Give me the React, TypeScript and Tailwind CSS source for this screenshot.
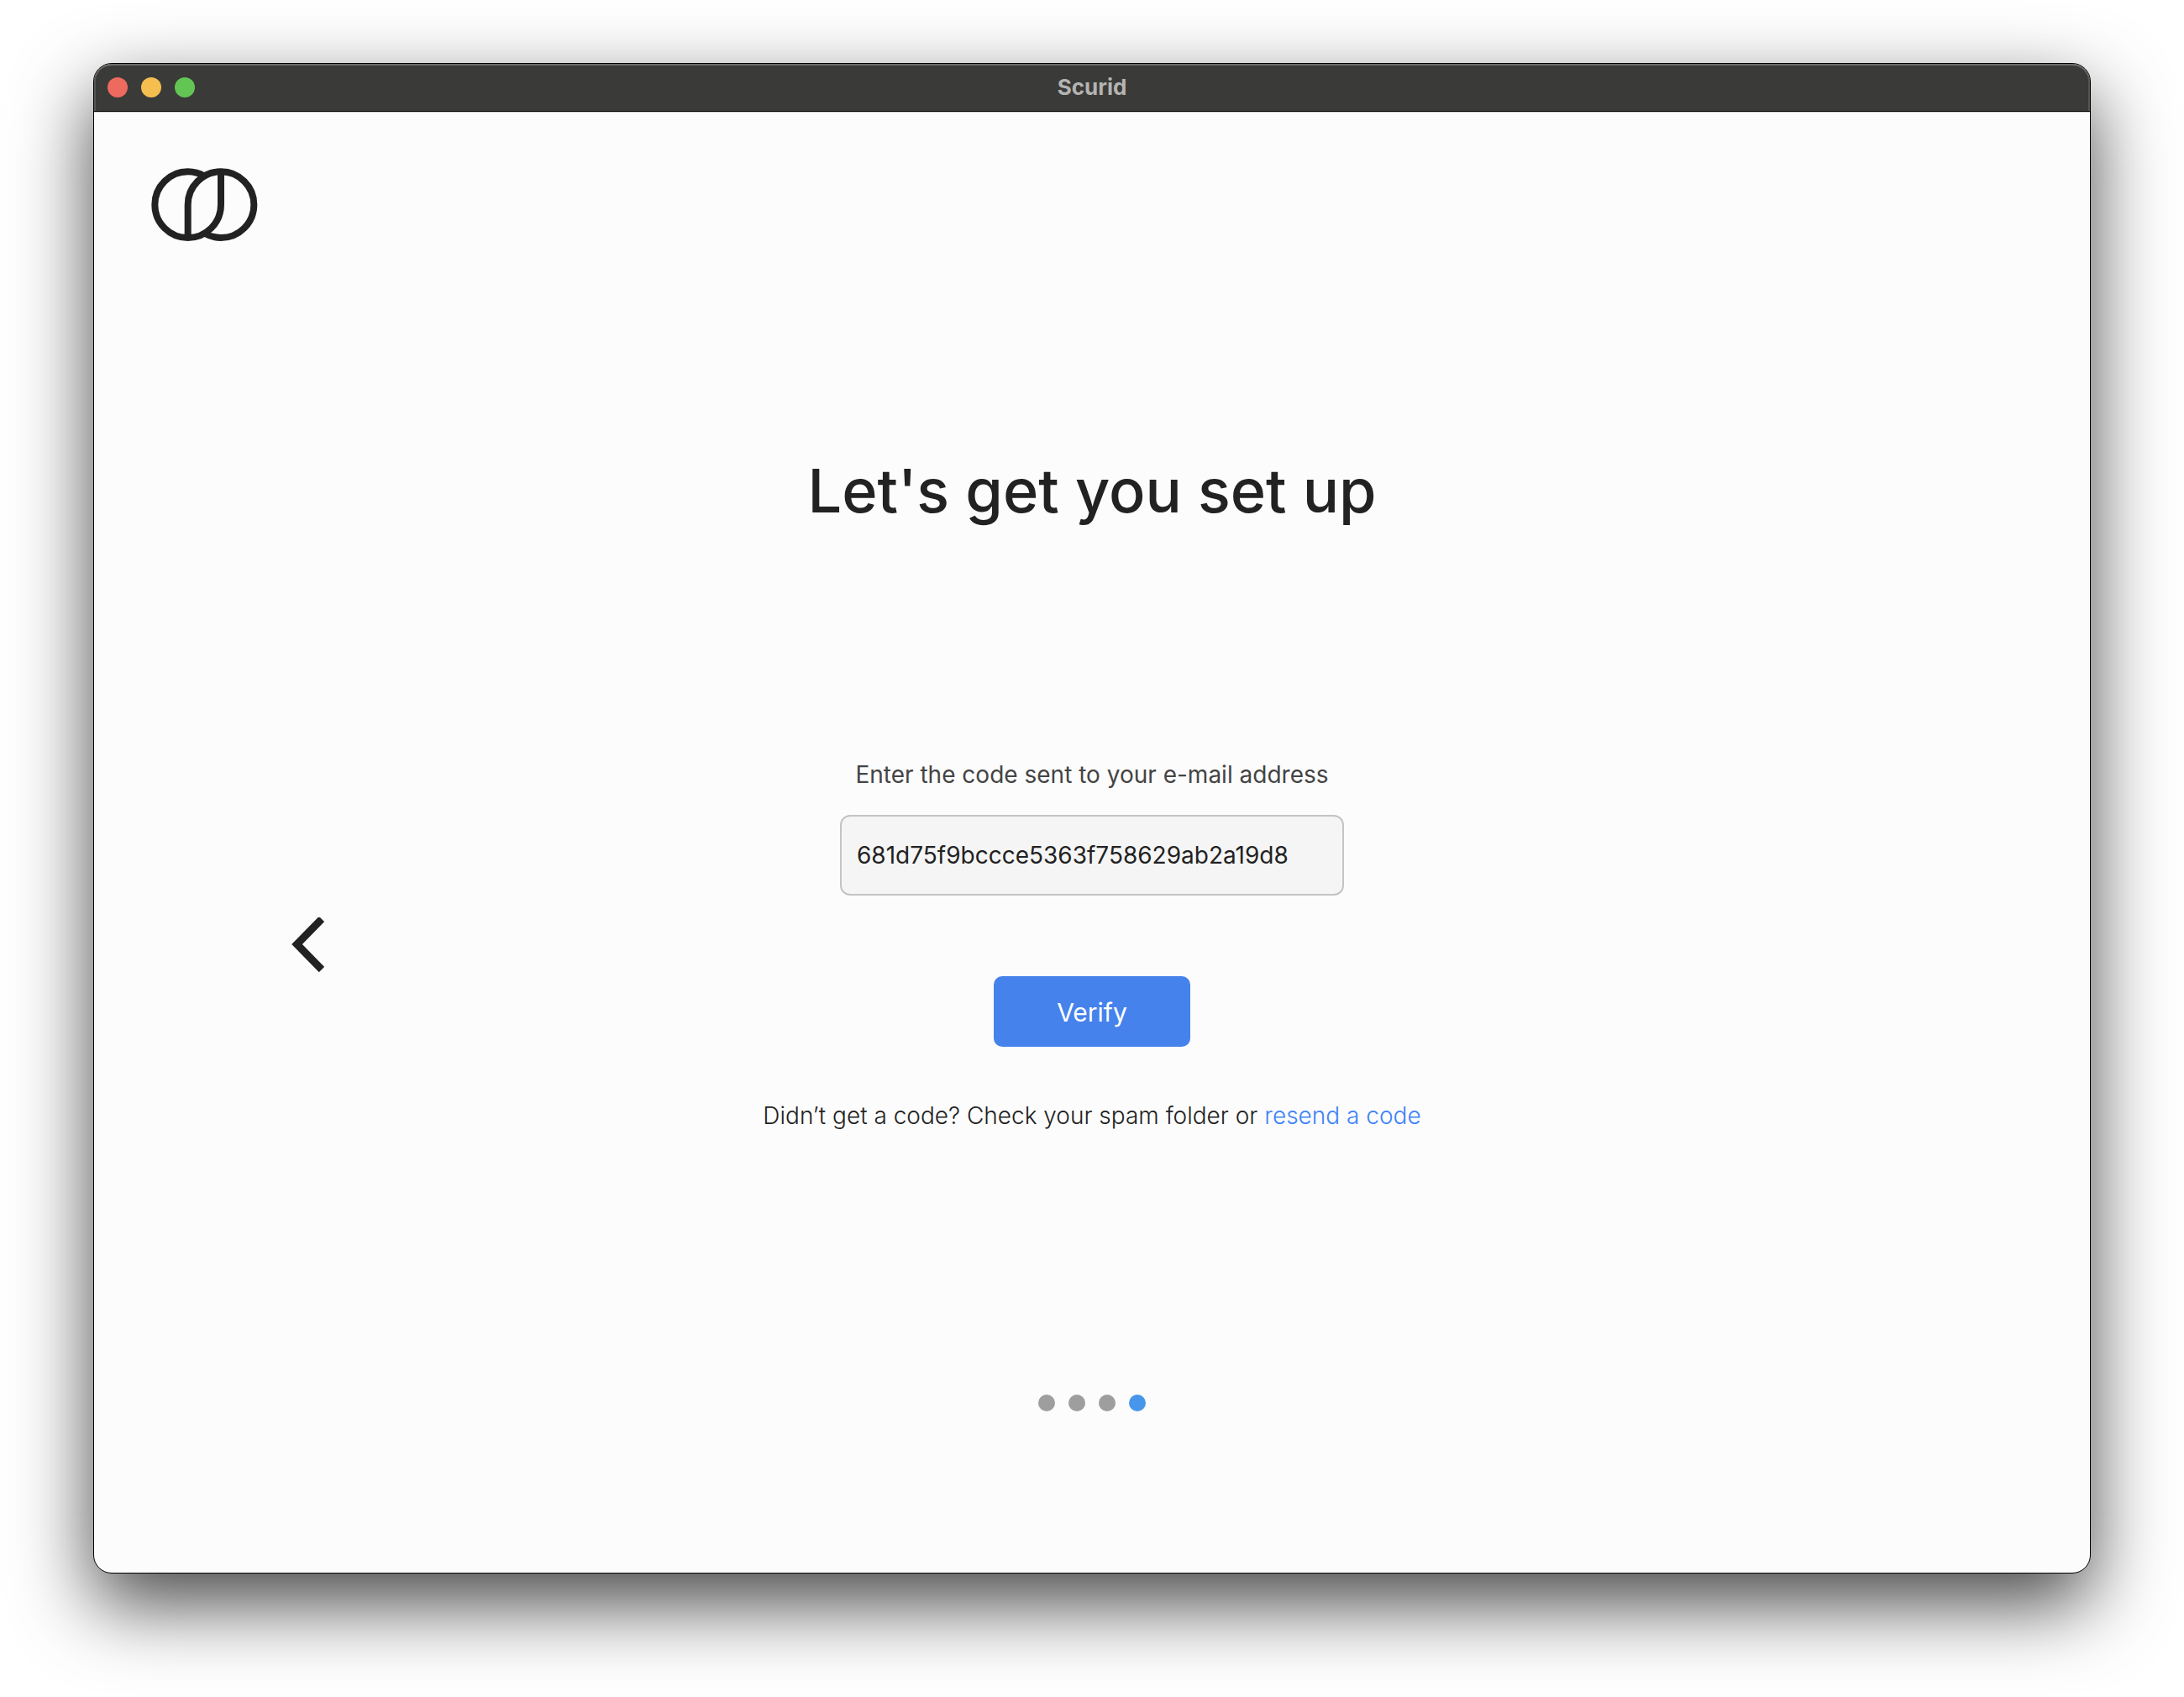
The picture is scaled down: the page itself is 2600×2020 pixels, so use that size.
import { useState } from "react";

function Logo() {
  return (
    <svg
      className="h-[87px] w-[127px]"
      viewBox="272 419 381 261"
      fill="none"
      stroke="#222222"
      strokeWidth="24"
      role="img"
      aria-label="Scurid logo"
    >
      <path d="M521 432V550A118 118 0 0 1 403 668A118 118 0 0 1 403 432A118 118 0 0 1 462 448" />
      <path d="M403 668V550A118 118 0 0 1 521 432A118 118 0 0 1 521 668A118 118 0 0 1 462 652" />
    </svg>
  );
}

function TitleBar() {
  return (
    <header className="relative flex h-[58px] items-center justify-center rounded-t-[21px] border-b border-[#c8c8c6] bg-[#3a3a38] pb-0.5 shadow-[inset_0_-1px_0_#000000,inset_0_2px_0_#6c6c6a,inset_2px_0_0_#555553,inset_-2px_0_0_#555553]">
      <div className="absolute top-4 left-4 flex gap-4">
        <button aria-label="Close" className="size-6 rounded-full bg-[#ed6a5f]" />
        <button aria-label="Minimize" className="size-6 rounded-full bg-[#f5bf4f]" />
        <button aria-label="Zoom" className="size-6 rounded-full bg-[#62c554]" />
      </div>
      <p className="text-[26px] leading-8 font-bold text-[#b4b4b2]">Scurid</p>
    </header>
  );
}

function Steps({ count, current }: { count: number; current: number }) {
  return (
    <ol className="flex justify-center gap-4">
      {Array.from({ length: count }, (_, i) => (
        <li
          key={i}
          aria-label={"Step " + (i + 1)}
          className={i === current ? "size-5 rounded-full bg-[#4796eb]" : "size-5 rounded-full bg-[#9e9e9e]"}
        />
      ))}
    </ol>
  );
}

export default function App() {
  const [code, setCode] = useState("681d75f9bccce5363f758629ab2a19d8");

  return (
    <div className="flex min-h-screen flex-col bg-white px-[111px] pt-[75px] pb-[147px] font-[Inter,sans-serif] text-[#222222]">
      <div className="flex grow flex-col rounded-[22px] border border-black bg-[#fcfcfc] shadow-[0_36px_92px_rgba(0,0,0,0.72)]">
        <TitleBar />
        <main className="flex grow flex-col">
          <div className="pt-[66px] pl-[68px]">
            <Logo />
          </div>
          <h1 className="mt-[253px] text-center text-[72px] leading-[88px] font-medium">
            Let's get you set up
          </h1>
          <div className="mt-[276px] grid grid-cols-[1fr_auto_1fr] items-center">
            <div className="pl-[235px]">
              <button aria-label="Back" className="block">
                <svg className="h-[67px] w-[39px]" viewBox="0 0 39 67" fill="none" stroke="#222222" strokeWidth="9">
                  <path d="M36 2L6.5 32L36 62" />
                </svg>
              </button>
            </div>
            <form className="flex flex-col items-center" onSubmit={(e) => e.preventDefault()}>
              <label htmlFor="code" className="text-[28px] leading-9 text-[#444444]">
                Enter the code sent to your e-mail address
              </label>
              <input
                id="code"
                type="text"
                value={code}
                onChange={(e) => setCode(e.target.value)}
                className="mt-[30px] h-24 w-[600px] rounded-xl border-2 border-[#c4c4c4] bg-[#f5f5f5] px-[18px] text-[28px] outline-none"
              />
              <button
                type="submit"
                className="mt-24 h-[84px] w-[234px] rounded-[10px] bg-[#4582ec] pt-0.5 text-[30px] text-white"
              >
                Verify
              </button>
              <p className="mt-16 text-[28px] leading-9 font-light">
                Didn’t get a code? Check your spam folder or{" "}
                <a href="#resend" className="text-[#3f83f8]">
                  resend a code
                </a>
              </p>
            </form>
          </div>
          <div className="mt-auto pb-48">
            <Steps count={4} current={3} />
          </div>
        </main>
      </div>
    </div>
  );
}
